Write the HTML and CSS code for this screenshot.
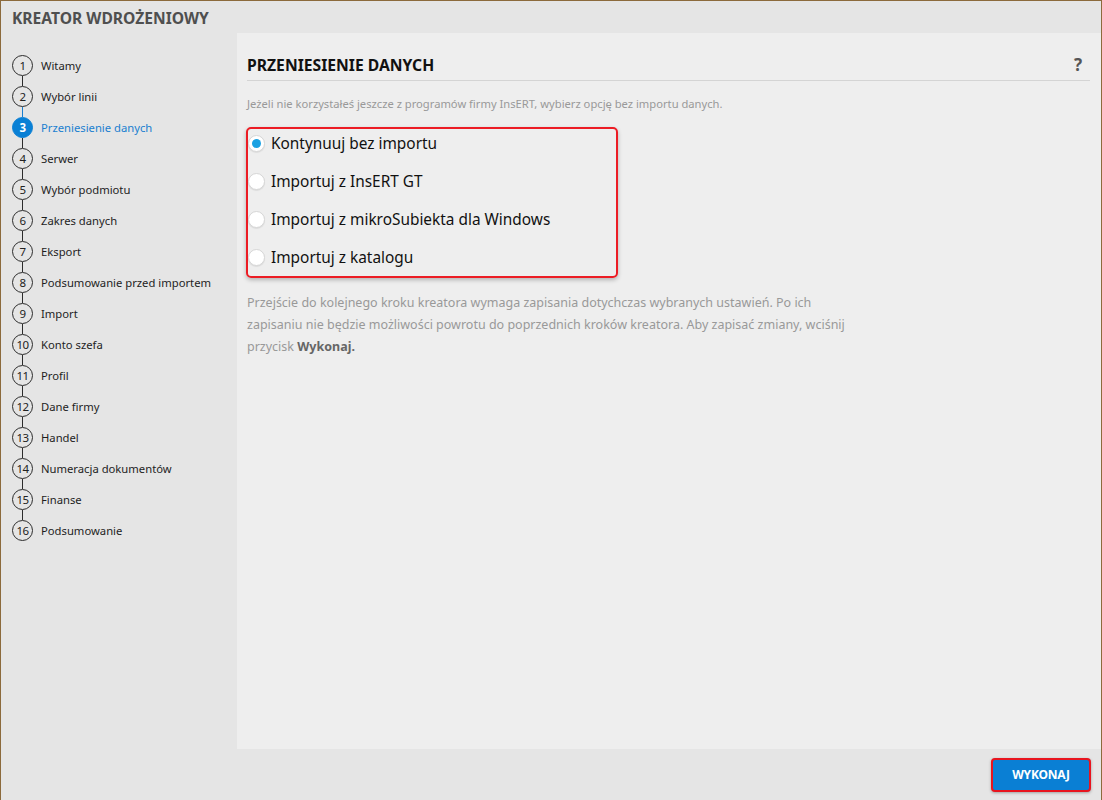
FILE: index.html
```html
<!DOCTYPE html>
<html lang="pl">
<head>
<meta charset="utf-8">
<title>Kreator wdrożeniowy</title>
<link rel="stylesheet" href="styles.css">
</head>
<body>
<div class="window">
  <header class="title">KREATOR WDROŻENIOWY</header>
  <div class="main">
    <nav class="steps">
      <ol>
        <li class="step done"><span class="num">1</span><span class="label">Witamy</span></li>
        <li class="step done before-active"><span class="num">2</span><span class="label">Wybór linii</span></li>
        <li class="step active"><span class="num">3</span><span class="label">Przeniesienie danych</span></li>
        <li class="step"><span class="num">4</span><span class="label">Serwer</span></li>
        <li class="step"><span class="num">5</span><span class="label">Wybór podmiotu</span></li>
        <li class="step"><span class="num">6</span><span class="label">Zakres danych</span></li>
        <li class="step"><span class="num">7</span><span class="label">Eksport</span></li>
        <li class="step"><span class="num">8</span><span class="label">Podsumowanie przed importem</span></li>
        <li class="step"><span class="num">9</span><span class="label">Import</span></li>
        <li class="step"><span class="num">10</span><span class="label">Konto szefa</span></li>
        <li class="step"><span class="num">11</span><span class="label">Profil</span></li>
        <li class="step"><span class="num">12</span><span class="label">Dane firmy</span></li>
        <li class="step"><span class="num">13</span><span class="label">Handel</span></li>
        <li class="step"><span class="num">14</span><span class="label">Numeracja dokumentów</span></li>
        <li class="step"><span class="num">15</span><span class="label">Finanse</span></li>
        <li class="step last"><span class="num">16</span><span class="label">Podsumowanie</span></li>
      </ol>
    </nav>
    <section class="panel">
      <div class="panel-head">
        <h1>PRZENIESIENIE DANYCH</h1>
        <span class="help">?</span>
      </div>
      <p class="intro">Jeżeli nie korzystałeś jeszcze z programów firmy InsERT, wybierz opcję bez importu danych.</p>
      <div class="options">
        <label class="option"><span class="radio checked"></span>Kontynuuj bez importu</label>
        <label class="option"><span class="radio"></span>Importuj z InsERT GT</label>
        <label class="option"><span class="radio"></span>Importuj z mikroSubiekta dla Windows</label>
        <label class="option"><span class="radio"></span>Importuj z katalogu</label>
      </div>
      <p class="note">Przejście do kolejnego kroku kreatora wymaga zapisania dotychczas wybranych ustawień. Po ich<br>zapisaniu nie będzie możliwości powrotu do poprzednich kroków kreatora. Aby zapisać zmiany, wciśnij<br>przycisk <b>Wykonaj.</b></p>
    </section>
  </div>
  <footer class="footer">
    <button class="btn-primary">WYKONAJ</button>
  </footer>
</div>
</body>
</html>
```

FILE: styles.css
```css
* { box-sizing: border-box; }
html, body { margin: 0; padding: 0; }
body {
  width: 1102px;
  height: 800px;
  overflow: hidden;
  font-family: "Noto Sans", "Open Sans", sans-serif;
  background: #e5e5e5;
}
.window {
  width: 1102px;
  height: 800px;
  border: 1px solid #8c6a3c;
  border-bottom: none;
  background: #e5e5e5;
  display: flex;
  flex-direction: column;
}
.title {
  height: 32px;
  padding: 6px 0 0 11px;
  font-size: 15.6px;
  font-weight: 700;
  color: #4f4f4f;
}
.main {
  flex: 1;
  display: flex;
  min-height: 0;
}
.steps {
  width: 236px;
  padding-top: 22px;
}
.steps ol {
  list-style: none;
  margin: 0;
  padding: 0 0 0 11px;
}
.step {
  height: 31px;
  display: flex;
  align-items: flex-start;
  position: relative;
}
.step::after {
  content: "";
  position: absolute;
  left: 10px;
  top: 21px;
  width: 1px;
  height: 10px;
  background: #2c2c2c;
}
.step.before-active::after { background: #1a7fd0; }
.step.last::after { display: none; }
.num {
  width: 21px;
  height: 21px;
  border: 1px solid #2c2c2c;
  border-radius: 50%;
  display: flex;
  align-items: center;
  justify-content: center;
  font-size: 11.5px;
  color: #222;
  flex: none;
  letter-spacing: -0.5px;
}
.label {
  margin-left: 8px;
  font-size: 11.25px;
  line-height: 21px;
  color: #1e1e1e;
  white-space: nowrap;
}
.step.active .num {
  background: #0a80d5;
  border-color: #0a80d5;
  color: #fff;
  font-weight: 700;
}
.step.active .label { color: #1a7fd0; }

.panel {
  flex: 1;
  background: #eeeeee;
  padding: 17px 11px 0 10px;
}
.panel-head {
  display: flex;
  align-items: center;
  justify-content: space-between;
  height: 31px;
  border-bottom: 1px solid #d4d4d4;
}
.panel-head h1 {
  margin: 0;
  font-size: 15.7px;
  line-height: 30px;
  font-weight: 700;
  color: #111;
}
.help {
  font-size: 17px;
  line-height: 30px;
  font-weight: 700;
  color: #555;
  margin-right: 8px;
}
.intro {
  margin: 15px 0 0 0;
  font-size: 11.2px;
  color: #999;
  line-height: 16px;
}
.options {
  margin: 15px 0 0 -1px;
  width: 372px;
  height: 151px;
  border: 2px solid #ec1c24;
  border-radius: 5px;
  box-shadow: 0 2px 4px rgba(0,0,0,0.25);
  padding: 2px 0 7px 0;
  display: flex;
  flex-direction: column;
  gap: 14px;
}
.option {
  height: 24px;
  display: flex;
  align-items: center;
  font-size: 15.4px;
  color: #111;
}
.radio {
  width: 17px;
  height: 17px;
  border-radius: 50%;
  background: #fff;
  border: 1px solid #d6d6d6;
  margin-right: 6px;
  position: relative;
  box-shadow: 0 1px 1px rgba(0,0,0,0.08);
  flex: none;
}
.radio.checked::after {
  content: "";
  position: absolute;
  left: 3px;
  top: 3px;
  width: 9px;
  height: 9px;
  border-radius: 50%;
  background: #1ba1e2;
}
.note {
  margin: 14px 0 0 0;
  width: 700px;
  font-size: 12.5px;
  line-height: 22px;
  color: #999;
}
.note b { color: #666; }

.footer {
  height: 51px;
  display: flex;
  justify-content: flex-end;
  align-items: center;
  padding: 0 10px 0 0;
}
.btn-primary {
  width: 100px;
  height: 34px;
  background: #0a7fd4;
  border: 2px solid #e8141e;
  border-radius: 4px;
  color: #fff;
  font-family: "Noto Sans", "Open Sans", sans-serif;
  font-weight: 700;
  font-size: 12px;
  letter-spacing: -0.2px;
  box-shadow: 0 1px 3px rgba(0,0,0,0.3);
}
```
